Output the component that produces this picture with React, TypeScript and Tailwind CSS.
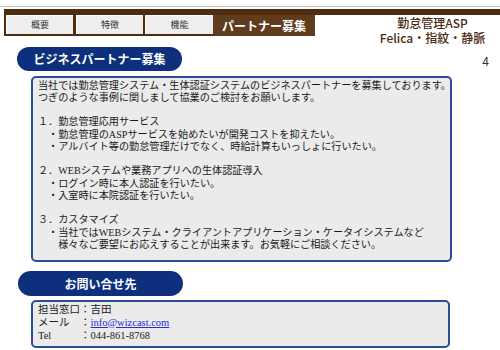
import React from "react";

const sans = { fontFamily: '"Noto Sans CJK JP", "Noto Sans", sans-serif' };
const serif = { fontFamily: '"Liberation Serif", "Noto Sans CJK JP", serif' };

const lines = [
  "当社では勤怠管理システム・生体認証システムのビジネスパートナーを募集しております。",
  "つぎのような事例に関しまして協業のご検討をお願いします。",
  "",
  "１．勤怠管理応用サービス",
  "　・勤怠管理のASPサービスを始めたいが開発コストを抑えたい。",
  "　・アルバイト等の勤怠管理だけでなく、時給計算もいっしょに行いたい。",
  "",
  "２．WEBシステムや業務アプリへの生体認証導入",
  "　・ログイン時に本人認証を行いたい。",
  "　・入室時に本院認証を行いたい。",
  "",
  "３．カスタマイズ",
  "　・当社ではWEBシステム・クライアントアプリケーション・ケータイシステムなど",
  "　　様々なご要望にお応えすることが出来ます。お気軽にご相談ください。",
];

function Tab({ label, w }: { label: string; w: string }) {
  return (
    <div
      className={`${w} h-full bg-[#eeeeee] border-t border-l border-white flex items-center justify-center text-[9px] text-[#333333]`}
      style={sans}
    >
      {label}
    </div>
  );
}

export default function App() {
  return (
    <div className="w-[500px] h-[350px] bg-white overflow-hidden relative">
      <div className="h-px bg-[#c4c4c4] mt-[6px]" />
      <div className="ml-[4px] mt-[2px] h-[6px] bg-[#4e2c10]" />
      <div className="ml-[4px] flex">
        <div className="flex h-[21px] bg-[#4e2c10] pl-[2px] pb-[2px]">
          <Tab label="概要" w="w-[67px]" />
          <div className="w-[3px]" />
          <Tab label="特徴" w="w-[67px]" />
          <div className="w-[2px]" />
          <Tab label="機能" w="w-[68px]" />
          <div
            className="w-[102px] h-[21px] bg-[#5e3c1d] flex items-center justify-center text-[12px] font-bold text-white"
            style={sans}
          >
            パートナー募集
          </div>
        </div>
        <div
          className="flex-1 pl-[50px] pt-[2px] flex flex-col items-center gap-[2.5px] text-[12px] leading-none font-medium text-[#4a2a10]"
          style={sans}
        >
          <div>勤怠管理ASP</div>
          <div>Felica・指紋・静脈</div>
        </div>
      </div>

      <div className="flex items-center mt-[3px]">
        <div
          className="ml-[17px] w-[165px] h-[24px] rounded-full bg-[#0d2f7c] flex items-center justify-center text-white text-[12px] font-bold"
          style={sans}
        >
          ビジネスパートナー募集
        </div>
        <div className="ml-auto mr-[11px] mt-[4px] text-[12px] text-[#333333]" style={sans}>
          4
        </div>
      </div>

      <div
        className="ml-[31px] mt-[5px] w-[421px] border-2 border-[#2d4c93] rounded-[5px] bg-[#ebebeb] pl-[5px] pt-[2px] pb-[9px] text-[10.15px] leading-[12.25px] text-[#1a1a1a] whitespace-pre"
        style={serif}
      >
        {lines.map((l, i) => (
          <div key={i} className="h-[12.25px]">
            {l}
          </div>
        ))}
      </div>

      <div
        className="ml-[18px] mt-[9px] w-[165px] h-[25px] rounded-full bg-[#0d2f7c] flex items-center justify-center text-white text-[12px] font-bold"
        style={sans}
      >
        お問い合せ先
      </div>

      <div
        className="ml-[31px] mt-[4px] w-[419px] border-2 border-[#2d4c93] rounded-[5px] bg-[#ebebeb] pl-[5px] pt-[2px] pb-[4px] text-[10.5px] leading-[12.75px] text-[#1a1a1a] whitespace-pre"
        style={serif}
      >
        <div className="flex">
          <span className="w-[42px]">担当窓口</span>
          <span>：吉田</span>
        </div>
        <div className="flex">
          <span className="w-[42px]">メール</span>
          <span>
            ：<span className="text-[#2a2ad0] underline">info@wizcast.com</span>
          </span>
        </div>
        <div className="flex">
          <span className="w-[42px]">Tel</span>
          <span>：044-861-8768</span>
        </div>
      </div>
    </div>
  );
}
